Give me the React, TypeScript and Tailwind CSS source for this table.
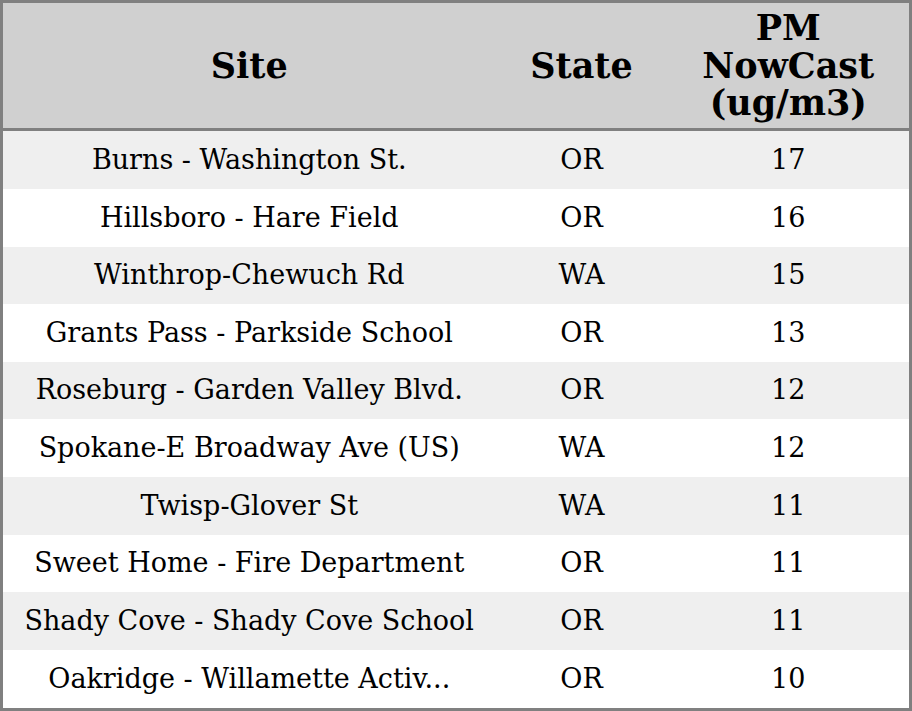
import React from 'react';

const rows: [string, string, number][] = [
    ['Burns - Washington St.', 'OR', 17],
    ['Hillsboro - Hare Field', 'OR', 16],
    ['Winthrop-Chewuch Rd', 'WA', 15],
    ['Grants Pass - Parkside School', 'OR', 13],
    ['Roseburg - Garden Valley Blvd.', 'OR', 12],
    ['Spokane-E Broadway Ave (US)', 'WA', 12],
    ['Twisp-Glover St', 'WA', 11],
    ['Sweet Home - Fire Department', 'OR', 11],
    ['Shady Cove - Shady Cove School', 'OR', 11],
    ['Oakridge - Willamette Activ...', 'OR', 10],
];

const App: React.FC = () => {
    return (
        <div className="w-[912px] h-[711px] bg-white" style={{ fontFamily: '"DejaVu Serif", serif' }}>
            <table className="w-[912px] h-[711px] border-collapse border-[3px] border-[#808080] table-fixed text-black">
                <colgroup>
                    <col className="w-[494px]" />
                    <col className="w-[172px]" />
                    <col />
                </colgroup>
                <thead>
                    <tr className="bg-[#d0d0d0] h-[128px] border-b-[3px] border-[#808080]">
                        <th className="text-[35px] font-bold leading-[37.5px] text-center align-middle">Site</th>
                        <th className="text-[35px] font-bold leading-[37.5px] text-center align-middle">State</th>
                        <th className="text-[35px] font-bold leading-[37.5px] text-center align-middle">
                            PM<br />NowCast<br />(ug/m3)
                        </th>
                    </tr>
                </thead>
                <tbody>
                    {rows.map(([site, state, val], i) => (
                        <tr key={i} className={i % 2 === 0 ? 'bg-[#efefef]' : 'bg-white'}>
                            <td className="text-[27px] text-center align-middle whitespace-nowrap">{site}</td>
                            <td className="text-[27px] text-center align-middle">{state}</td>
                            <td className="text-[27px] text-center align-middle">{val}</td>
                        </tr>
                    ))}
                </tbody>
            </table>
        </div>
    );
};

export default App;
